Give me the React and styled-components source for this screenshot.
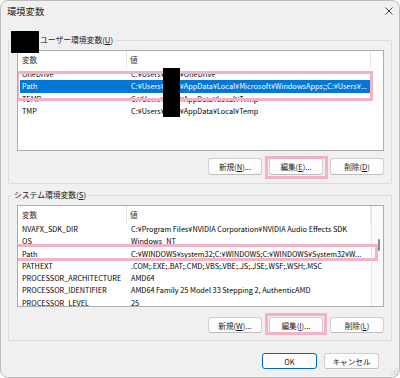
import React from 'react'
import styled, { createGlobalStyle } from 'styled-components'

const GlobalStyle = createGlobalStyle`
  html, body {
    margin: 0;
    background: #ffffff;
  }
  body {
    font-family: 'Noto Sans CJK JP', 'Noto Sans', sans-serif;
    font-size: 7.3px;
    color: #000;
  }
`

const ROW_H = 12.3

const Window = styled.div`
  width: 400px;
  height: 378px;
  box-sizing: border-box;
  border: 1px solid #bcbcbc;
  border-radius: 8px;
  background: #f0f0f0;
  display: flex;
  flex-direction: column;
  overflow: hidden;
`

const TitleBar = styled.div`
  height: 20px;
  padding: 0 6px;
  display: flex;
  align-items: center;
  justify-content: space-between;
`

const Title = styled.div`
  font-size: 9.3px;
  color: #1a1a1a;
`

const CloseButton = styled.div`
  width: 8px;
  height: 8px;
  display: flex;
  color: #333;
`

const Content = styled.div`
  padding-top: 13px;
  display: flex;
  flex-direction: column;
`

const Group = styled.fieldset`
  margin: ${p => p.$top}px 7px 0 7px;
  padding: 4px 7px ${p => p.$bottom}px 8px;
  border: 1px solid #dcdcdc;
  border-radius: 2px;
  min-width: 0;
`

const Legend = styled.legend`
  margin-left: ${p => p.$shift}px;
  padding: 0 2px 0 ${p => p.$padLeft}px;
  height: 12px;
  line-height: 12px;
  display: flex;
  align-items: center;
  font-size: 7.8px;
  color: #1a1a1a;
`

const NameBlock = styled.span`
  width: 28px;
  height: 22px;
  margin: 4px 1px 0 0;
  flex: none;
  background: #000;
`

const ListBox = styled.div`
  height: ${p => p.$height}px;
  box-sizing: border-box;
  border: 1px solid #adadad;
  background: #fff;
  display: flex;
  overflow: hidden;
`

const ListMain = styled.div`
  flex: 1;
  min-width: 0;
`

const Header = styled.div`
  height: 17px;
  display: grid;
  grid-template-columns: 109px 244px 1fr;
  color: #333;
  font-size: 7.6px;
`

const HeaderCell = styled.div`
  border-right: 1px solid #e5e5e5;
  padding-left: ${p => p.$pad}px;
  line-height: 17px;
  &:last-child {
    border-right: none;
  }
`

const Rows = styled.div`
  padding-right: ${p => p.$gutter}px;
`

const Row = styled.div`
  position: relative;
  height: ${ROW_H}px;
  line-height: ${ROW_H}px;
  margin: 0 1px 0 2px;
  display: grid;
  grid-template-columns: 107px 1fr;
  white-space: nowrap;
  background: ${p => (p.$selected ? '#0078d7' : 'transparent')};
  color: ${p => (p.$selected ? '#fff' : '#000')};

  &::after {
    content: '';
    display: ${p => (p.$mark ? 'block' : 'none')};
    position: absolute;
    inset: ${p => p.$mark || '0'};
    border: 3px solid #f2b3c6;
    z-index: 2;
    pointer-events: none;
  }
`

const NameCell = styled.span`
  padding-left: 2px;
  overflow: hidden;
`

const ValueCell = styled.span`
  padding-left: 4px;
  overflow: hidden;
`

const Redacted = styled.span`
  position: relative;
  z-index: 3;
  display: inline-block;
  width: 17px;
  height: ${ROW_H}px;
  margin-left: -2px;
  vertical-align: top;
  background: #000;
`

const ScrollTrack = styled.div`
  width: 11px;
  flex: none;
  border-left: 1px solid #e5e5e5;
  background: #fafafa;
  padding-top: 33px;
  display: flex;
  justify-content: center;
`

const ScrollThumb = styled.div`
  width: 2px;
  height: 12px;
  margin-left: 2px;
  border-radius: 1px;
  background: #8a8a8a;
`

const ButtonRow = styled.div`
  margin-top: ${p => p.$top}px;
  display: flex;
  justify-content: flex-end;
  gap: ${p => p.$gap}px;
`

const Button = styled.div`
  position: relative;
  width: ${p => p.$width || 54}px;
  height: ${p => p.$height || 16}px;
  box-sizing: border-box;
  border: 1px solid ${p => (p.$primary ? '#0067c0' : '#d0d0d0')};
  border-bottom-color: ${p => (p.$primary ? '#0067c0' : '#bdbdbd')};
  border-radius: 3px;
  background: #fdfdfd;
  display: flex;
  align-items: center;
  justify-content: center;
  font-size: 7.6px;
  color: #1a1a1a;

  &::after {
    content: '';
    display: ${p => (p.$mark ? 'block' : 'none')};
    position: absolute;
    inset: ${p => p.$mark || '0'};
    border: 3px solid #f2b3c6;
    pointer-events: none;
  }
`

const Key = styled.span`
  text-decoration: underline;
`

const Footer = styled.div`
  margin-top: 12px;
  padding-right: 20px;
  display: flex;
  justify-content: flex-end;
  gap: 7px;
`

const Grip = styled.div`
  position: absolute;
  right: 2px;
  bottom: 2px;
  width: 8px;
  height: 8px;
  display: flex;
`

const Frame = styled.div`
  position: relative;
  width: 400px;
  height: 378px;
`

const userVars = [
  { name: 'OneDrive', pre: 'C:¥Users¥', post: '¥OneDrive' },
  {
    name: 'Path',
    pre: 'C:¥Users¥',
    post: '¥AppData¥Local¥Microsoft¥WindowsApps;;C:¥Users¥...',
    selected: true,
    mark: '-9px -3px -8px -4px',
  },
  { name: 'TEMP', pre: 'C:¥Users¥', post: '¥AppData¥Local¥Temp' },
  { name: 'TMP', pre: 'C:¥Users¥', post: '¥AppData¥Local¥Temp' },
]

const systemVars = [
  { name: 'NVAFX_SDK_DIR', value: 'C:¥Program Files¥NVIDIA Corporation¥NVIDIA Audio Effects SDK' },
  { name: 'OS', value: 'Windows_NT' },
  {
    name: 'Path',
    value: 'C:¥WINDOWS¥system32;C:¥WINDOWS;C:¥WINDOWS¥System32¥W...',
    mark: '-4px -8px -1px -5px',
  },
  { name: 'PATHEXT', value: '.COM;.EXE;.BAT;.CMD;.VBS;.VBE;.JS;.JSE;.WSF;.WSH;.MSC' },
  { name: 'PROCESSOR_ARCHITECTURE', value: 'AMD64' },
  { name: 'PROCESSOR_IDENTIFIER', value: 'AMD64 Family 25 Model 33 Stepping 2, AuthenticAMD' },
  { name: 'PROCESSOR_LEVEL', value: '25' },
]

const ListHeader = () => (
  <Header>
    <HeaderCell $pad={4}>変数</HeaderCell>
    <HeaderCell $pad={3}>値</HeaderCell>
    <HeaderCell />
  </Header>
)

const Mnemonic = ({ label, k, tail = '' }) => (
  <span>
    {label}(<Key>{k}</Key>){tail}
  </span>
)

const App = () => (
  <Frame>
    <GlobalStyle />
    <Window>
      <TitleBar>
        <Title>環境変数</Title>
        <CloseButton>
          <svg width="8" height="8" viewBox="0 0 8 8">
            <path d="M0.5 0.5 L7.5 7.5 M7.5 0.5 L0.5 7.5" stroke="currentColor" strokeWidth="0.9" />
          </svg>
        </CloseButton>
      </TitleBar>

      <Content>
        <Group $top={0} $bottom={8}>
          <Legend $shift={-6} $padLeft={0}>
            <NameBlock />
            ユーザー環境変数(<Key>U</Key>)
          </Legend>
          <ListBox $height={101}>
            <ListMain>
              <ListHeader />
              <Rows $gutter={12}>
                {userVars.map(v => (
                  <Row key={v.name} $selected={v.selected} $mark={v.mark}>
                    <NameCell>{v.name}</NameCell>
                    <ValueCell>
                      {v.pre}
                      <Redacted />
                      {v.post}
                    </ValueCell>
                  </Row>
                ))}
              </Rows>
            </ListMain>
          </ListBox>
          <ButtonRow $top={7} $gap={7}>
            <Button $height={17}><Mnemonic label="新規" k="N" tail="..." /></Button>
            <Button $height={17} $mark="-3px -6px -5px -5px"><Mnemonic label="編集" k="E" tail="..." /></Button>
            <Button $height={17}><Mnemonic label="削除" k="D" /></Button>
          </ButtonRow>
        </Group>

        <Group $top={5} $bottom={7}>
          <Legend $shift={-5} $padLeft={2}>
            システム環境変数(<Key>S</Key>)
          </Legend>
          <ListBox $height={102}>
            <ListMain>
              <ListHeader />
              <Rows $gutter={0}>
                {systemVars.map(v => (
                  <Row key={v.name} $mark={v.mark}>
                    <NameCell>{v.name}</NameCell>
                    <ValueCell>{v.value}</ValueCell>
                  </Row>
                ))}
              </Rows>
            </ListMain>
            <ScrollTrack>
              <ScrollThumb />
            </ScrollTrack>
          </ListBox>
          <ButtonRow $top={10} $gap={7}>
            <Button><Mnemonic label="新規" k="W" tail="..." /></Button>
            <Button $mark="-5px -5px -3px -5px"><Mnemonic label="編集" k="I" tail="..." /></Button>
            <Button><Mnemonic label="削除" k="L" /></Button>
          </ButtonRow>
        </Group>

        <Footer>
          <Button $primary $width={55}>OK</Button>
          <Button $width={55}>キャンセル</Button>
        </Footer>
      </Content>
    </Window>
    <Grip>
      <svg width="8" height="8" viewBox="0 0 8 8" fill="#9a9a9a">
        <circle cx="7" cy="1" r="0.6" />
        <circle cx="4.5" cy="3.5" r="0.6" />
        <circle cx="7" cy="3.5" r="0.6" />
        <circle cx="2" cy="6" r="0.6" />
        <circle cx="4.5" cy="6" r="0.6" />
        <circle cx="7" cy="6" r="0.6" />
      </svg>
    </Grip>
  </Frame>
)

export default App
